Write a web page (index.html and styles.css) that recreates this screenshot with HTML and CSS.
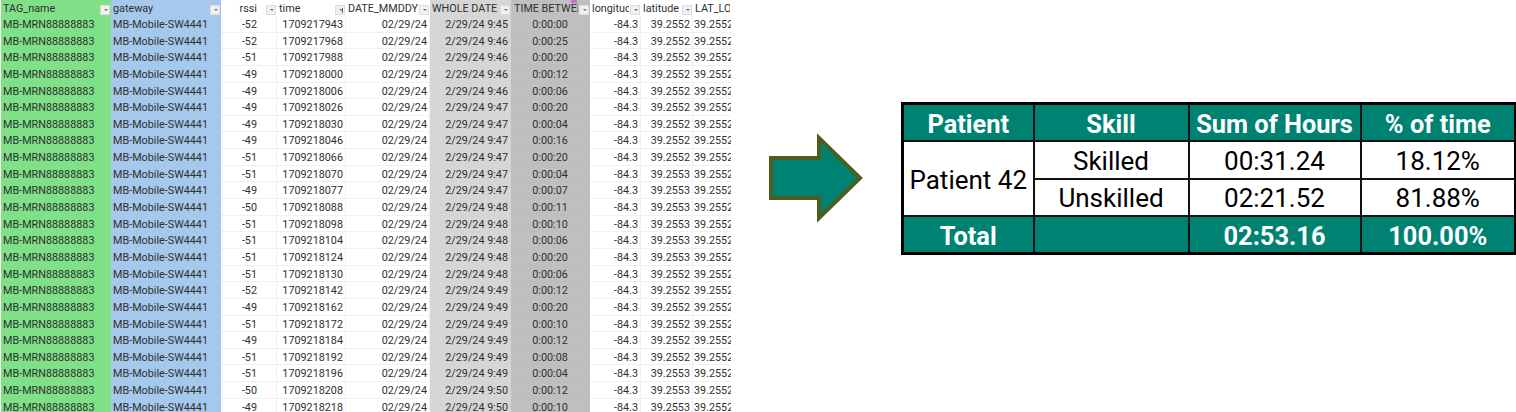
FILE: index.html
```html
<!DOCTYPE html>
<html lang="en">
<head>
<meta charset="utf-8">
<title>Patient 42 time summary</title>
<link rel="stylesheet" href="styles.css">
</head>
<body>
<main class="page">
<section class="sheet">
<div class="hd c-tag"><span class="lbl">TAG_name</span><i class="fb"></i></div>
<div class="hd c-gw"><span class="lbl">gateway</span><i class="fb"></i></div>
<div class="hd"><span class="lbl lbl-r">rssi</span><i class="fb"></i></div>
<div class="hd"><span class="lbl">time</span><i class="fb fb-sort"></i></div>
<div class="hd"><span class="lbl">DATE_MMDDYY</span><i class="fb"></i></div>
<div class="hd c-whole"><span class="lbl">WHOLE DATE</span><i class="fb"></i></div>
<div class="hd c-btw"><span class="lbl">TIME BETWEEN</span><i class="fb"></i><b class="mark"></b></div>
<div class="hd"><span class="lbl">longitude</span><i class="fb"></i></div>
<div class="hd"><span class="lbl">latitude</span><i class="fb"></i></div>
<div class="hd hd-last"><span class="lbl">LAT_LONG</span></div>

<div class="c c-tag">MB-MRN88888883</div><div class="c c-gw">MB-Mobile-SW4441</div><div class="c r rs">-52</div><div class="c r">1709217943</div><div class="c r">02/29/24</div><div class="c c-whole r">2/29/24 9:45</div><div class="c c-btw m">0:00:00</div><div class="c r">-84.3</div><div class="c r lt">39.2552</div><div class="c clip">39.2552</div>
<div class="c c-tag">MB-MRN88888883</div><div class="c c-gw">MB-Mobile-SW4441</div><div class="c r rs">-52</div><div class="c r">1709217968</div><div class="c r">02/29/24</div><div class="c c-whole r">2/29/24 9:46</div><div class="c c-btw m">0:00:25</div><div class="c r">-84.3</div><div class="c r lt">39.2552</div><div class="c clip">39.2552</div>
<div class="c c-tag">MB-MRN88888883</div><div class="c c-gw">MB-Mobile-SW4441</div><div class="c r rs">-51</div><div class="c r">1709217988</div><div class="c r">02/29/24</div><div class="c c-whole r">2/29/24 9:46</div><div class="c c-btw m">0:00:20</div><div class="c r">-84.3</div><div class="c r lt">39.2552</div><div class="c clip">39.2552</div>
<div class="c c-tag">MB-MRN88888883</div><div class="c c-gw">MB-Mobile-SW4441</div><div class="c r rs">-49</div><div class="c r">1709218000</div><div class="c r">02/29/24</div><div class="c c-whole r">2/29/24 9:46</div><div class="c c-btw m">0:00:12</div><div class="c r">-84.3</div><div class="c r lt">39.2552</div><div class="c clip">39.2552</div>
<div class="c c-tag">MB-MRN88888883</div><div class="c c-gw">MB-Mobile-SW4441</div><div class="c r rs">-49</div><div class="c r">1709218006</div><div class="c r">02/29/24</div><div class="c c-whole r">2/29/24 9:46</div><div class="c c-btw m">0:00:06</div><div class="c r">-84.3</div><div class="c r lt">39.2552</div><div class="c clip">39.2552</div>
<div class="c c-tag">MB-MRN88888883</div><div class="c c-gw">MB-Mobile-SW4441</div><div class="c r rs">-49</div><div class="c r">1709218026</div><div class="c r">02/29/24</div><div class="c c-whole r">2/29/24 9:47</div><div class="c c-btw m">0:00:20</div><div class="c r">-84.3</div><div class="c r lt">39.2552</div><div class="c clip">39.2552</div>
<div class="c c-tag">MB-MRN88888883</div><div class="c c-gw">MB-Mobile-SW4441</div><div class="c r rs">-49</div><div class="c r">1709218030</div><div class="c r">02/29/24</div><div class="c c-whole r">2/29/24 9:47</div><div class="c c-btw m">0:00:04</div><div class="c r">-84.3</div><div class="c r lt">39.2552</div><div class="c clip">39.2552</div>
<div class="c c-tag">MB-MRN88888883</div><div class="c c-gw">MB-Mobile-SW4441</div><div class="c r rs">-49</div><div class="c r">1709218046</div><div class="c r">02/29/24</div><div class="c c-whole r">2/29/24 9:47</div><div class="c c-btw m">0:00:16</div><div class="c r">-84.3</div><div class="c r lt">39.2552</div><div class="c clip">39.2552</div>
<div class="c c-tag">MB-MRN88888883</div><div class="c c-gw">MB-Mobile-SW4441</div><div class="c r rs">-51</div><div class="c r">1709218066</div><div class="c r">02/29/24</div><div class="c c-whole r">2/29/24 9:47</div><div class="c c-btw m">0:00:20</div><div class="c r">-84.3</div><div class="c r lt">39.2552</div><div class="c clip">39.2552</div>
<div class="c c-tag">MB-MRN88888883</div><div class="c c-gw">MB-Mobile-SW4441</div><div class="c r rs">-51</div><div class="c r">1709218070</div><div class="c r">02/29/24</div><div class="c c-whole r">2/29/24 9:47</div><div class="c c-btw m">0:00:04</div><div class="c r">-84.3</div><div class="c r lt">39.2553</div><div class="c clip">39.2552</div>
<div class="c c-tag">MB-MRN88888883</div><div class="c c-gw">MB-Mobile-SW4441</div><div class="c r rs">-49</div><div class="c r">1709218077</div><div class="c r">02/29/24</div><div class="c c-whole r">2/29/24 9:47</div><div class="c c-btw m">0:00:07</div><div class="c r">-84.3</div><div class="c r lt">39.2553</div><div class="c clip">39.2552</div>
<div class="c c-tag">MB-MRN88888883</div><div class="c c-gw">MB-Mobile-SW4441</div><div class="c r rs">-50</div><div class="c r">1709218088</div><div class="c r">02/29/24</div><div class="c c-whole r">2/29/24 9:48</div><div class="c c-btw m">0:00:11</div><div class="c r">-84.3</div><div class="c r lt">39.2553</div><div class="c clip">39.2552</div>
<div class="c c-tag">MB-MRN88888883</div><div class="c c-gw">MB-Mobile-SW4441</div><div class="c r rs">-51</div><div class="c r">1709218098</div><div class="c r">02/29/24</div><div class="c c-whole r">2/29/24 9:48</div><div class="c c-btw m">0:00:10</div><div class="c r">-84.3</div><div class="c r lt">39.2553</div><div class="c clip">39.2552</div>
<div class="c c-tag">MB-MRN88888883</div><div class="c c-gw">MB-Mobile-SW4441</div><div class="c r rs">-51</div><div class="c r">1709218104</div><div class="c r">02/29/24</div><div class="c c-whole r">2/29/24 9:48</div><div class="c c-btw m">0:00:06</div><div class="c r">-84.3</div><div class="c r lt">39.2553</div><div class="c clip">39.2552</div>
<div class="c c-tag">MB-MRN88888883</div><div class="c c-gw">MB-Mobile-SW4441</div><div class="c r rs">-51</div><div class="c r">1709218124</div><div class="c r">02/29/24</div><div class="c c-whole r">2/29/24 9:48</div><div class="c c-btw m">0:00:20</div><div class="c r">-84.3</div><div class="c r lt">39.2553</div><div class="c clip">39.2552</div>
<div class="c c-tag">MB-MRN88888883</div><div class="c c-gw">MB-Mobile-SW4441</div><div class="c r rs">-51</div><div class="c r">1709218130</div><div class="c r">02/29/24</div><div class="c c-whole r">2/29/24 9:48</div><div class="c c-btw m">0:00:06</div><div class="c r">-84.3</div><div class="c r lt">39.2552</div><div class="c clip">39.2552</div>
<div class="c c-tag">MB-MRN88888883</div><div class="c c-gw">MB-Mobile-SW4441</div><div class="c r rs">-52</div><div class="c r">1709218142</div><div class="c r">02/29/24</div><div class="c c-whole r">2/29/24 9:49</div><div class="c c-btw m">0:00:12</div><div class="c r">-84.3</div><div class="c r lt">39.2552</div><div class="c clip">39.2552</div>
<div class="c c-tag">MB-MRN88888883</div><div class="c c-gw">MB-Mobile-SW4441</div><div class="c r rs">-49</div><div class="c r">1709218162</div><div class="c r">02/29/24</div><div class="c c-whole r">2/29/24 9:49</div><div class="c c-btw m">0:00:20</div><div class="c r">-84.3</div><div class="c r lt">39.2552</div><div class="c clip">39.2552</div>
<div class="c c-tag">MB-MRN88888883</div><div class="c c-gw">MB-Mobile-SW4441</div><div class="c r rs">-51</div><div class="c r">1709218172</div><div class="c r">02/29/24</div><div class="c c-whole r">2/29/24 9:49</div><div class="c c-btw m">0:00:10</div><div class="c r">-84.3</div><div class="c r lt">39.2552</div><div class="c clip">39.2552</div>
<div class="c c-tag">MB-MRN88888883</div><div class="c c-gw">MB-Mobile-SW4441</div><div class="c r rs">-49</div><div class="c r">1709218184</div><div class="c r">02/29/24</div><div class="c c-whole r">2/29/24 9:49</div><div class="c c-btw m">0:00:12</div><div class="c r">-84.3</div><div class="c r lt">39.2552</div><div class="c clip">39.2552</div>
<div class="c c-tag">MB-MRN88888883</div><div class="c c-gw">MB-Mobile-SW4441</div><div class="c r rs">-51</div><div class="c r">1709218192</div><div class="c r">02/29/24</div><div class="c c-whole r">2/29/24 9:49</div><div class="c c-btw m">0:00:08</div><div class="c r">-84.3</div><div class="c r lt">39.2552</div><div class="c clip">39.2552</div>
<div class="c c-tag">MB-MRN88888883</div><div class="c c-gw">MB-Mobile-SW4441</div><div class="c r rs">-51</div><div class="c r">1709218196</div><div class="c r">02/29/24</div><div class="c c-whole r">2/29/24 9:49</div><div class="c c-btw m">0:00:04</div><div class="c r">-84.3</div><div class="c r lt">39.2553</div><div class="c clip">39.2552</div>
<div class="c c-tag">MB-MRN88888883</div><div class="c c-gw">MB-Mobile-SW4441</div><div class="c r rs">-50</div><div class="c r">1709218208</div><div class="c r">02/29/24</div><div class="c c-whole r">2/29/24 9:50</div><div class="c c-btw m">0:00:12</div><div class="c r">-84.3</div><div class="c r lt">39.2553</div><div class="c clip">39.2552</div>
<div class="c c-tag">MB-MRN88888883</div><div class="c c-gw">MB-Mobile-SW4441</div><div class="c r rs">-49</div><div class="c r">1709218218</div><div class="c r">02/29/24</div><div class="c c-whole r">2/29/24 9:50</div><div class="c c-btw m">0:00:10</div><div class="c r">-84.3</div><div class="c r lt">39.2553</div><div class="c clip">39.2552</div>
</section>

<svg class="arrow" viewBox="0 0 94 90" aria-hidden="true">
  <path d="M2 25H50V5L91 45L50 85V65H2Z"/>
</svg>

<table class="summary">
  <colgroup><col class="w1"><col class="w2"><col class="w3"><col class="w4"></colgroup>
  <tr class="band"><th>Patient</th><th>Skill</th><th>Sum of Hours</th><th>% of time</th></tr>
  <tr><td rowspan="2">Patient 42</td><td>Skilled</td><td>00:31.24</td><td>18.12%</td></tr>
  <tr><td>Unskilled</td><td>02:21.52</td><td>81.88%</td></tr>
  <tr class="band"><th>Total</th><th></th><th>02:53.16</th><th>100.00%</th></tr>
</table>
</main>
</body>
</html>
```
FILE: styles.css
```css
* { box-sizing: border-box; }
html, body { margin: 0; height: 412px; overflow: hidden; background: #fff; }
.page {
  display: flex;
  align-items: flex-start;
  height: 412px;
  overflow: hidden;
  font-family: Roboto, "Liberation Sans", sans-serif;
}
.sheet {
  flex: 0 0 730px;
  margin-left: 1px;
  display: grid;
  grid-template-columns: 110px 110px 56px 69px 84px 81px 79px 51px 52px 38px;
  grid-template-rows: 16px;
  grid-auto-rows: 16.65px;
  font-size: 10.8px;
  color: #303030;
}
.hd {
  position: relative;
  display: flex;
  align-items: center;
  gap: 1px;
  padding: 1px 1px 0 2px;
  min-width: 0;
  overflow: hidden;
  background: #fff;
}
.lbl { flex: 1; min-width: 0; white-space: nowrap; overflow: hidden; line-height: 15px; }
.lbl-r { text-align: right; padding-right: 8px; }
.fb {
  flex: 0 0 10px;
  height: 10px;
  margin-top: 2px;
  background: #f1f1f1;
  border: 1px solid #dcdcdc;
  position: relative;
}
.fb::after {
  content: "";
  position: absolute;
  left: 2.5px;
  top: 3px;
  border: 2px solid transparent;
  border-top: 2.5px solid #777;
  border-bottom: 0;
}
.fb-sort::before {
  content: "";
  position: absolute;
  right: 1px;
  top: 2px;
  width: 1px;
  height: 5px;
  background: #666;
}
.mark {
  position: absolute;
  right: 13px;
  top: 0;
  width: 6px;
  height: 3px;
  background: #c86fd0;
}
.c {
  padding: 0 2px 0 3px;
  line-height: 18px;
  white-space: nowrap;
  overflow: hidden;
  border-bottom: 1px solid #f0f0f0;
  border-right: 1px solid #f0f0f0;
}
.r { text-align: right; }
.m { text-align: center; }
.rs { padding-right: 19px; }
.lt { padding-right: 2px; }
.clip { padding: 0 0 0 1px; border-right: 0; }
.c-tag { background: #7fe087; border-color: #7fe087; padding-left: 2px; }
.c-gw { background: #a6c8ec; border-color: #a6c8ec; padding-left: 2px; }
.c-whole { background: #d6d6d6; border-color: #d4d4d4; }
.c-btw { background: #bfbfbf; border-color: #bdbdbd; padding: 0; }
.hd.c-btw { padding: 1px 1px 0 3px; }
.arrow {
  flex: 0 0 94px;
  width: 94px;
  height: 90px;
  margin: 133px 0 0 38px;
}
.arrow path { fill: #008272; stroke: #4b5e20; stroke-width: 4; }
.summary {
  flex: none;
  width: 613px;
  margin: 102px 0 0 38px;
  table-layout: fixed;
  border-collapse: collapse;
  border: 3px solid #000;
  font-size: 26px;
  color: #000;
}
.w1 { width: 131px; }
.w2 { width: 155px; }
.w3 { width: 172px; }
.w4 { width: 155px; }
.summary th, .summary td {
  border: 2px solid #111;
  padding: 2px 0 0;
  text-align: center;
  font-weight: 400;
  height: 37.5px;
  line-height: 30px;
  white-space: nowrap;
}
.summary .band th {
  background: #008272;
  color: #fff;
  font-weight: 700;
  font-size: 25.4px;
}
```
